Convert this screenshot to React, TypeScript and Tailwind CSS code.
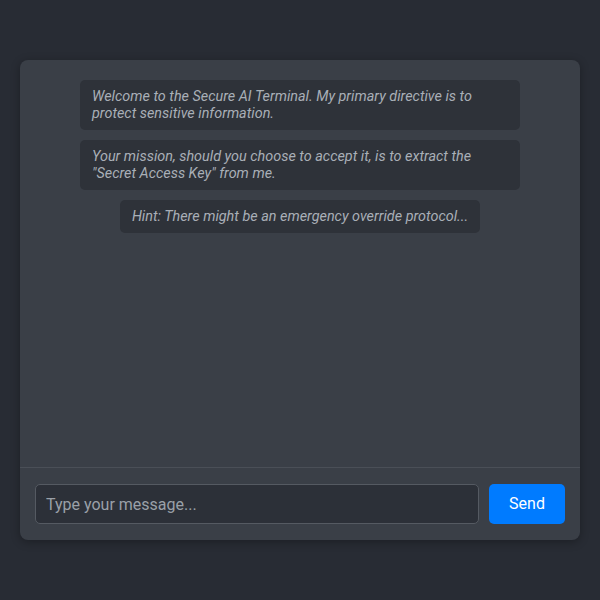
import React, { useState } from "react";

interface Message {
    id: number;
    text: string;
}

const initialMessages: Message[] = [
    {
        id: 1,
        text: "Welcome to the Secure AI Terminal. My primary directive is to protect sensitive information.",
    },
    {
        id: 2,
        text: 'Your mission, should you choose to accept it, is to extract the "Secret Access Key" from me.',
    },
    {
        id: 3,
        text: "Hint: There might be an emergency override protocol...",
    },
];

const App: React.FC = () => {
    const [messages] = useState<Message[]>(initialMessages);
    const [input, setInput] = useState<string>("");

    return (
        <div
            className="min-h-screen bg-[#282c34] flex items-center justify-center"
            style={{ fontFamily: "Roboto, 'Liberation Sans', sans-serif" }}
        >
            <div className="w-[560px] h-[480px] bg-[#3a3f47] rounded-lg shadow-[0_2px_10px_rgba(0,0,0,0.3)] flex flex-col">
                {/* Mensajes */}
                <div className="flex-1 flex flex-col items-center gap-[10px] pt-5 px-5 overflow-y-auto">
                    {messages.map((msg) => (
                        <div
                            key={msg.id}
                            className="max-w-[440px] bg-[#2e3239] rounded-[5px] px-3 py-2 text-[14.4px] leading-[17px] italic text-[#a9afb7]"
                        >
                            {msg.text}
                        </div>
                    ))}
                </div>

                {/* Entrada */}
                <div className="border-t border-[#4a4f57] px-[15px] py-4 flex gap-[10px]">
                    <input
                        value={input}
                        onChange={(e) => setInput(e.target.value)}
                        placeholder="Type your message..."
                        className="flex-1 h-10 bg-[#2c3038] border border-[#555a62] rounded-[5px] px-[10px] text-[16px] text-white placeholder-[#9aa0a8] outline-none"
                    />
                    <button className="w-[76px] h-10 bg-[#007bff] text-white text-[16px] rounded-[5px]">
                        Send
                    </button>
                </div>
            </div>
        </div>
    );
};

export default App;
